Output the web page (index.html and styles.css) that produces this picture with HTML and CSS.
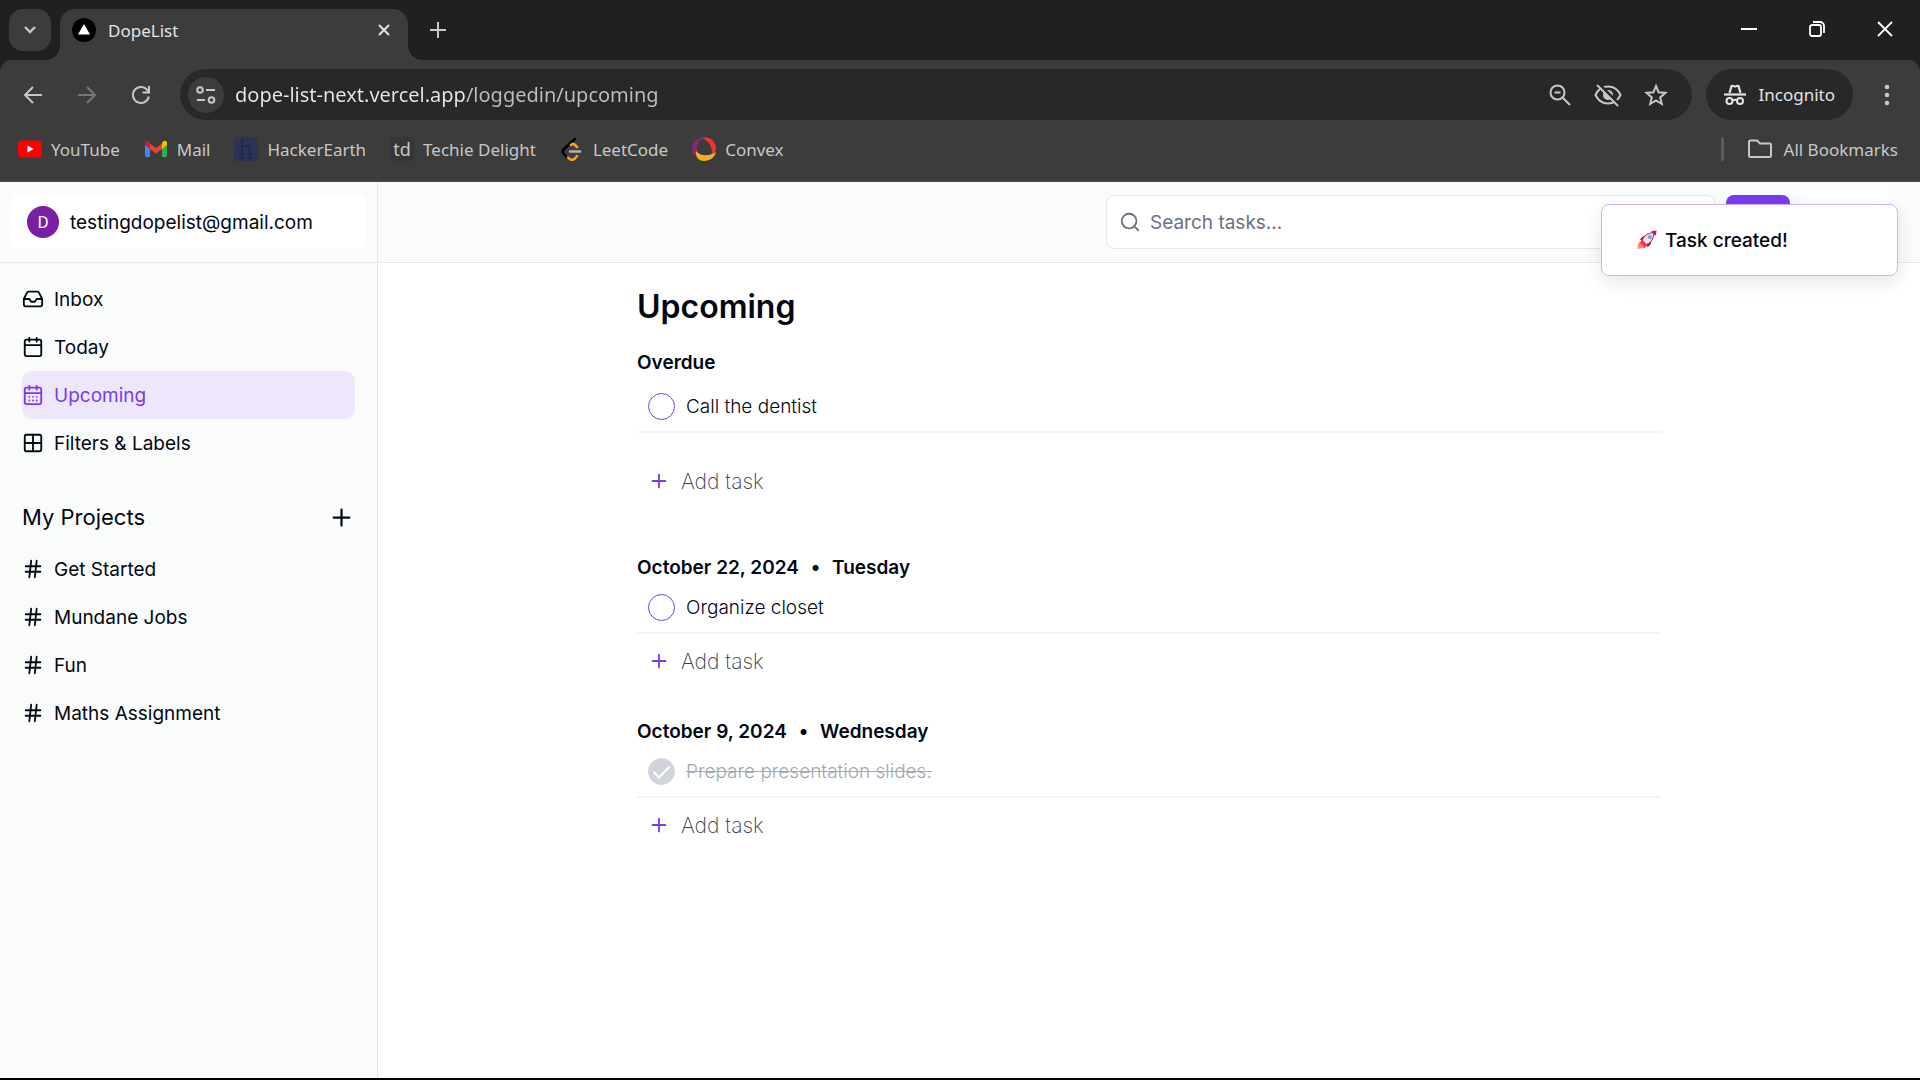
FILE: index.html
```
<!DOCTYPE html>
<html lang="en">
<head>
    <meta charset="UTF-8">
    <meta name="viewport" content="width=device-width, initial-scale=1.0">
    <title>DopeList</title>
    <link rel="stylesheet" href="styles.css">
</head>
<body>
    <!-- Shared icons -->
    <svg class="sprite" aria-hidden="true">
        <symbol id="plus" viewBox="0 0 24 24"><path d="M5 12h14M12 5v14"/></symbol>
        <symbol id="hash" viewBox="0 0 24 24"><path d="M4 9h16M4 15h16M10 3L8 21M16 3l-2 18"/></symbol>
    </svg>

    <div class="browser">
        <div class="tab-strip">
            <button class="tab-search" aria-label="Search tabs">
                <svg width="14" height="14" viewBox="0 0 14 14"><path d="M2 4l5 5 5-5" stroke-width="2.4"/></svg>
            </button>
            <div class="tab">
                <svg class="favicon" width="24" height="24" viewBox="0 0 24 24"><circle cx="12" cy="12" r="12" fill="#000"/><path d="M12 6l6 10.500H6z" fill="#fff"/></svg>
                <span class="tab-title">DopeList</span>
                <button class="icon-button" aria-label="Close tab">
                    <svg width="14" height="14" viewBox="0 0 14 14"><path d="M2 2l10 10M12 2L2 12" stroke-width="2"/></svg>
                </button>
            </div>
            <button class="icon-button new-tab" aria-label="New tab">
                <svg width="16" height="16" viewBox="0 0 16 16"><path d="M8 0v16M0 8h16" stroke-width="2"/></svg>
            </button>
            <div class="window-controls">
                <button class="icon-button" aria-label="Minimize"><svg width="16" height="16" viewBox="0 0 16 16"><path d="M0 8h16" stroke-width="2"/></svg></button>
                <button class="icon-button" aria-label="Restore"><svg width="16" height="16" viewBox="0 0 16 16"><rect x="1" y="4" width="11" height="11" rx="2" stroke-width="1.800"/><path d="M4 1h7a4 4 0 0 1 4 4v7" stroke-width="1.800"/></svg></button>
                <button class="icon-button" aria-label="Close"><svg width="16" height="16" viewBox="0 0 16 16"><path d="M1 1l14 14M15 1L1 15" stroke-width="1.800"/></svg></button>
            </div>
        </div>

        <div class="toolbar">
            <button class="icon-button" aria-label="Back"><svg width="20" height="20" viewBox="0 0 20 20"><path d="M19 10H2M10 2l-8 8 8 8" stroke-width="2"/></svg></button>
            <button class="icon-button dimmed" aria-label="Forward"><svg width="20" height="20" viewBox="0 0 20 20"><path d="M1 10h17M10 2l8 8-8 8" stroke-width="2"/></svg></button>
            <button class="icon-button" aria-label="Reload"><svg width="20" height="20" viewBox="0 0 20 20"><path d="M17.800 11.500A8 8 0 1 1 16 4.700l2 2" stroke-width="2"/><path d="M18 1v6.500h-6.500" stroke-width="2"/></svg></button>
            <div class="omnibox">
                <button class="site-info" aria-label="View site information">
                    <svg width="20" height="18" viewBox="0 0 20 18"><circle cx="4" cy="4" r="2.800"/><path d="M10 4h9M1 14h8"/><circle cx="15.500" cy="14" r="2.800"/></svg>
                </button>
                <input class="url" type="text" aria-label="Address" value="dope-list-next.vercel.app/loggedin/upcoming">
                <div class="omnibox-actions">
                    <button class="icon-button" aria-label="Zoom"><svg width="22" height="22" viewBox="0 0 22 22"><circle cx="8.500" cy="8.500" r="7"/><path d="M5.500 8.500h6M13.500 13.500l7.500 7.500"/></svg></button>
                    <button class="icon-button" aria-label="Third-party cookies blocked"><svg width="28" height="24" viewBox="0 0 28 24"><path d="M1.500 12C4 6.500 8.500 3.500 14 3.500S24 6.500 26.500 12C24 17.500 19.500 20.500 14 20.500S4 17.500 1.500 12z"/><circle cx="14" cy="12" r="5" fill="#c7c7c7" stroke="none"/><path d="M5 1l21 21" stroke="#282828" stroke-width="3"/><path d="M3 2l21 21"/></svg></button>
                    <button class="icon-button" aria-label="Bookmark this tab"><svg width="24" height="24" viewBox="0 0 24 24"><path d="M12 3l2.600 6.300 6.800.6-5.200 4.500 1.600 6.600-5.800-3.500-5.800 3.500 1.600-6.600L2.600 9.900l6.800-.6z"/></svg></button>
                </div>
            </div>
            <button class="incognito">
                <svg width="22" height="22" viewBox="0 0 22 22"><path d="M5.500 9l2-7c2-.8 2 .5 3.500.5S12.500 1.200 14.500 2l2 7" stroke-width="2.200"/><path d="M0 10.500h22" stroke-width="2.200"/><circle cx="5.500" cy="17" r="3"/><circle cx="16" cy="17" r="3"/><path d="M8.500 16.500c1.500-1 3-1 4.500 0"/></svg>
                Incognito
            </button>
            <button class="icon-button menu" aria-label="Menu"><svg width="6" height="22" viewBox="0 0 6 22"><circle cx="3" cy="3" r="2.300"/><circle cx="3" cy="11" r="2.300"/><circle cx="3" cy="19" r="2.300"/></svg></button>
        </div>

        <nav class="bookmarks" aria-label="Bookmarks">
            <a href="#"><svg width="24" height="24" viewBox="0 0 24 24"><rect y="3.500" width="24" height="17" rx="4" fill="#f00"/><path d="M9.500 8.500v7l6-3.500z" fill="#fff"/></svg>YouTube</a>
            <a href="#"><svg width="24" height="24" viewBox="0 0 24 24"><path d="M1 7v11.500Q1 20 2.500 20H6V10z" fill="#4285f4"/><path d="M23 7v11.500Q23 20 21.500 20H18V10z" fill="#34a853"/><path d="M18 6.500V12l5-4V6c0-2.500-2.500-3-4-1.500z" fill="#fbbc04"/><path d="M1 6v2l5 4V6.500L5 4.500C3.500 3 1 3.500 1 6z" fill="#c5221f"/><path d="M6 6.500l6 4.500 6-4.500V12l-6 4.500L6 12z" fill="#ea4335"/></svg>Mail</a>
            <a href="#"><svg width="24" height="24" viewBox="0 0 24 24"><path d="M0 0h24v24H0z" fill="#2c3454"/><path d="M8 3v16M8 11c2-3 8-3 8 1v7M5 21h5M14 21h5" fill="none" stroke="#20294d" stroke-width="2"/></svg>HackerEarth</a>
            <a href="#"><span class="td-icon">td</span>Techie Delight</a>
            <a href="#"><svg width="24" height="24" viewBox="0 0 24 24" fill="none" stroke-linecap="round" stroke-width="2.500"><path d="M15 2L4 12q-2.500 2.500 0 5l3 3.500" stroke="#000"/><path d="M11 8q2-2 4 0l2 2M8 20.500q3.500 4 7 1l2-2.500" stroke="#ffa116"/><path d="M10 14.500h10" stroke="#b3b3b3"/></svg>LeetCode</a>
            <a href="#"><svg width="24" height="24" viewBox="0 0 24 24"><path d="M8 1C17-2 24 4 24 11c0 3-1.500 5.500-4.500 8C21 9 17 3 8 1z" fill="#ee342f"/><path d="M14 2C7 1 4 7 5 13c.2 2 .8 4 2 6.500C-1 20-2 9 3 4c3-3 7-4 11-2z" fill="#8d2676"/><path d="M4 14c4 5 12 6 20 1-1 5-6 9-12 9-5 0-9-4-8-10z" fill="#f3b01c"/></svg>Convex</a>
            <a class="all-bookmarks" href="#"><svg width="24" height="20" viewBox="0 0 24 20" fill="none" stroke="#c7c7c7" stroke-width="2"><path d="M1 3Q1 1.500 2.500 1.500H9l3 3h9.500Q23 4.500 23 6v10.500q0 1.500-1.500 1.500h-19Q1 18 1 16.500z"/></svg>All Bookmarks</a>
        </nav>
    </div>

    <div class="app">
        <aside class="sidebar">
            <div class="user-bar">
                <button class="user">
                    <span class="avatar">D</span>
                    testingdopelist@gmail.com
                </button>
            </div>
            <nav class="nav">
                <a href="#"><svg class="icon" viewBox="0 0 24 24"><path d="M22 12h-6l-2 3h-4l-2-3H2"/><path d="M5.450 5.110L2 12v6a2 2 0 0 0 2 2h16a2 2 0 0 0 2-2v-6l-3.450-6.890A2 2 0 0 0 16.760 4H7.240a2 2 0 0 0-1.790 1.110z"/></svg>Inbox</a>
                <a href="#"><svg class="icon" viewBox="0 0 24 24"><path d="M8 2v4M16 2v4M3 10h18"/><rect x="3" y="4" width="18" height="18" rx="2"/></svg>Today</a>
                <a class="active" href="#"><svg class="icon" viewBox="0 0 24 24"><path d="M8 2v4M16 2v4M3 10h18"/><rect x="3" y="4" width="18" height="18" rx="2"/><path d="M8 14h.01M12 14h.01M16 14h.01M8 18h.01M12 18h.01M16 18h.01"/></svg>Upcoming</a>
                <a href="#"><svg class="icon" viewBox="0 0 24 24"><path d="M12 3v18M3 12h18"/><rect x="3" y="3" width="18" height="18" rx="2"/></svg>Filters &amp; Labels</a>
            </nav>
            <div class="projects-head">
                <h2>My Projects</h2>
                <button aria-label="Add project"><svg class="icon icon-large"><use href="#plus"/></svg></button>
            </div>
            <nav class="nav projects">
                <a href="#"><svg class="icon"><use href="#hash"/></svg>Get Started</a>
                <a href="#"><svg class="icon"><use href="#hash"/></svg>Mundane Jobs</a>
                <a href="#"><svg class="icon"><use href="#hash"/></svg>Fun</a>
                <a href="#"><svg class="icon"><use href="#hash"/></svg>Maths Assignment</a>
            </nav>
        </aside>

        <div class="content">
            <header class="header">
                <label class="search">
                    <svg class="icon" viewBox="0 0 24 24"><circle cx="11" cy="11" r="8"/><path d="M21 21l-4.300-4.300"/></svg>
                    <input type="search" placeholder="Search tasks..." aria-label="Search tasks">
                </label>
                <button class="search-button" aria-label="Search"></button>
                <div class="brand"></div>
            </header>

            <main class="main">
                <h1>Upcoming</h1>
                <section class="group overdue">
                    <h3>Overdue</h3>
                    <label class="task"><input type="checkbox">Call the dentist</label>
                    <button class="add-task"><svg class="icon"><use href="#plus"/></svg>Add task</button>
                </section>
                <section class="group">
                    <h3>October 22, 2024 <span class="dot">•</span> Tuesday</h3>
                    <label class="task"><input type="checkbox">Organize closet</label>
                    <button class="add-task"><svg class="icon"><use href="#plus"/></svg>Add task</button>
                </section>
                <section class="group">
                    <h3>October 9, 2024 <span class="dot">•</span> Wednesday</h3>
                    <label class="task done"><input type="checkbox" checked>Prepare presentation slides.</label>
                    <button class="add-task"><svg class="icon"><use href="#plus"/></svg>Add task</button>
                </section>
            </main>
        </div>

        <div class="toast" role="status">
            <svg width="20" height="20" viewBox="0 0 20 20">
                <path d="M1 14q1-3 4-3l4 4q0 3-3 3l-5.500 1z" fill="#ff8a65"/>
                <path d="M3 10q1-4 6-4.500L7 10zM10 17q4-1 4.500-6L10 13z" fill="#c2185b"/>
                <path d="M5 11Q7 3 17 2.500q0 9-8 12.500z" fill="#e4eaee" stroke="#c2185b"/>
                <path d="M14 1.500Q17 .5 19.500.5q0 2.500-1 5.500z" fill="#c2185b"/>
                <path d="M5 9l5.500 6-3 3L6 15l-3-1z" fill="#f8315a"/>
                <circle cx="13" cy="7" r="2.200" fill="#82aec0"/>
            </svg>
            Task created!
        </div>
    </div>
</body>
</html>
```
FILE: styles.css
```
* {
    box-sizing: border-box;
}
body {
    margin: 0;
    min-height: 100vh;
    display: flex;
    flex-direction: column;
    border-bottom: 2px solid #000;
    font-family: Inter, sans-serif;
    font-size: 19px;
    color: #030712;
    background-color: #fff;
}
button, input {
    font: inherit;
    color: inherit;
    border: none;
    background: none;
    padding: 0;
    margin: 0;
}
button {
    cursor: pointer;
}
a {
    color: inherit;
    text-decoration: none;
}
h1, h2, h3 {
    margin: 0;
}
svg {
    flex-shrink: 0;
}
.sprite {
    display: none;
}

/* Browser window */
.browser {
    font-family: "Noto Sans", sans-serif;
    font-size: 17px;
    color: #c7c7c7;
    background-color: #1f2120;
}
.browser button {
    display: flex;
    align-items: center;
    justify-content: center;
}
.browser button svg {
    fill: none;
    stroke: currentColor;
    stroke-width: 2;
}
.browser .menu svg {
    fill: currentColor;
    stroke: none;
}
.icon-button {
    width: 36px;
    height: 36px;
}
.dimmed {
    color: #777;
}
.tab-strip {
    display: flex;
    height: 60px;
    padding: 9px 17px 0 9px;
}
.tab-search {
    width: 42px;
    height: 42px;
    border-radius: 14px;
    background-color: #3c3c3c;
}
.tab {
    position: relative;
    display: flex;
    align-items: center;
    gap: 12px;
    width: 348px;
    margin-left: 9px;
    padding: 0 6px 9px 12px;
    border-radius: 15px 15px 0 0;
    background-color: #3c3c3c;
    color: #e3e3e3;
}
/* curved feet of the active tab */
.tab::before, .tab::after {
    content: "";
    position: absolute;
    bottom: 0;
    width: 15px;
    height: 15px;
}
.tab::before {
    left: -15px;
    background: radial-gradient(circle at 0 0, transparent 15px, #3c3c3c 15px);
}
.tab::after {
    right: -15px;
    background: radial-gradient(circle at 100% 0, transparent 15px, #3c3c3c 15px);
}
.tab-title {
    flex: 1;
}
.new-tab {
    margin: 3px 0 0 12px;
}
.window-controls {
    display: flex;
    gap: 32px;
    margin: 2px 0 0 auto;
    color: #fff;
}
.toolbar {
    display: flex;
    align-items: center;
    gap: 18px;
    padding: 9px 15px 0;
    border-radius: 12px 12px 0 0;
    background-color: #3c3c3c;
}
.omnibox {
    flex: 1;
    display: flex;
    align-items: center;
    height: 51px;
    margin-left: 3px;
    padding: 0 18px 0 8px;
    border-radius: 26px;
    background-color: #282828;
}
.site-info {
    width: 36px;
    height: 36px;
    border-radius: 50%;
    background-color: #3c3c3c;
}
.url {
    flex: 1;
    margin-left: 11px;
    font-size: 20px;
    color: transparent;
    background: linear-gradient(90deg, #e8e8e8 230px, #bfbfbf 230px);
    background-clip: text;
}
.omnibox-actions {
    display: flex;
    gap: 12px;
}
.incognito {
    gap: 13px;
    height: 51px;
    padding: 0 18px;
    margin-left: -4px;
    border-radius: 26px;
    background-color: #282828;
    color: #e3e3e3;
}
.menu {
    margin-left: -2px;
}
.bookmarks {
    display: flex;
    align-items: center;
    gap: 24px;
    height: 62px;
    padding: 0 22px 2px 18px;
    border-bottom: 2px solid #474747;
    background-color: #3c3c3c;
}
.bookmarks a {
    display: flex;
    align-items: center;
    gap: 9px;
}
.td-icon {
    width: 24px;
    font-size: 18px;
    line-height: 24px;
    text-align: center;
    background-color: #363636;
}
.bookmarks .all-bookmarks {
    gap: 12px;
    margin-left: auto;
}
.all-bookmarks::before {
    content: "";
    width: 3px;
    height: 24px;
    margin-right: 12px;
    border-radius: 2px;
    background-color: #5c5c5c;
}

/* App */
.app {
    position: relative;
    flex: 1;
    display: flex;
}
.icon {
    width: 22px;
    height: 22px;
    fill: none;
    stroke: currentColor;
    stroke-width: 2;
    stroke-linecap: round;
    stroke-linejoin: round;
}
.icon-large {
    width: 27px;
    height: 27px;
}
.sidebar {
    width: 378px;
    flex-shrink: 0;
    border-right: 1px solid #e5e7eb;
    background-color: #fafcfb;
}
.user-bar {
    height: 81px;
    padding: 13px 11px;
    border-bottom: 1px solid #e5e7eb;
}
.user {
    display: flex;
    align-items: center;
    gap: 11px;
    width: 100%;
    height: 54px;
    padding: 0 16px;
    border-radius: 8px;
    background-color: #fff;
}
.avatar {
    width: 32px;
    line-height: 32px;
    border-radius: 50%;
    font-family: Roboto, sans-serif;
    font-size: 17px;
    color: #fff;
    background-color: #7b1fa2;
}
.nav {
    padding: 12px 22px 0;
}
.nav a {
    display: flex;
    align-items: center;
    gap: 10px;
    height: 48px;
    border-radius: 10px;
}
.nav .active {
    color: #7c3aed;
    background-color: #eee6fa;
}
.projects-head {
    display: flex;
    align-items: center;
    justify-content: space-between;
    margin-top: 36px;
    padding: 0 22px;
}
.projects-head h2 {
    font-size: 22px;
    line-height: 28px;
    font-weight: 400;
}
.projects-head button {
    display: flex;
}
.projects {
    padding-top: 14px;
}
.content {
    flex: 1;
    min-width: 0;
}
.header {
    display: flex;
    align-items: center;
    justify-content: flex-end;
    gap: 11px;
    height: 81px;
    padding: 0 32px;
    border-bottom: 1px solid #e5e7eb;
    background-color: #fafcfb;
}
.search {
    display: flex;
    align-items: center;
    gap: 9px;
    flex: 0 1 609px;
    height: 54px;
    padding: 0 12px;
    border: 1px solid #e5e7eb;
    border-radius: 8px;
    background-color: #fff;
    color: #6b7280;
}
.search input {
    flex: 1;
}
.search input::placeholder {
    color: #6b7280;
}
.search-button {
    width: 64px;
    height: 54px;
    border-radius: 8px;
    background-color: #7c3aed;
}
.brand {
    width: 87px;
    height: 74px;
    background-color: #fdfefd;
}
.main {
    max-width: 1024px;
    margin: 0 auto;
    padding-top: 24px;
}
.main h1 {
    font-size: 32px;
    line-height: 40px;
    font-weight: 600;
}
.group {
    padding-bottom: 32px;
}
.group h3 {
    font-size: 19px;
    line-height: 24px;
    font-weight: 600;
}
.dot {
    margin: 0 7px;
}
.task {
    display: flex;
    align-items: center;
    gap: 11px;
    height: 54px;
    padding: 3px 0 0 11px;
    border-bottom: 2px solid #f3f4f6;
    font-weight: 300;
}
.task input {
    appearance: none;
    width: 27px;
    height: 27px;
    border: 1px solid #7c3aed;
    border-radius: 50%;
}
.task input:checked {
    display: flex;
    align-items: center;
    justify-content: center;
    border-color: #d1d5db;
    background-color: #d1d5db;
}
.task input:checked::after {
    content: "";
    width: 7px;
    height: 14px;
    margin-bottom: 4px;
    border: solid #fff;
    border-width: 0 2px 2px 0;
    transform: rotate(45deg);
}
.done {
    color: #a5a9b1;
    text-decoration: line-through;
}
.add-task {
    display: flex;
    align-items: center;
    gap: 11px;
    height: 54px;
    padding-left: 11px;
    font-size: 21px;
    font-weight: 200;
    color: #374151;
}
.add-task .icon {
    color: #7c3aed;
}
.overdue h3 {
    margin: 24px 0 4px;
}
.overdue .add-task {
    margin-top: 21px;
}
.overdue {
    padding-bottom: 48px;
}
.toast {
    position: absolute;
    top: 22px;
    right: 22px;
    display: flex;
    align-items: center;
    gap: 8px;
    width: 297px;
    height: 72px;
    padding: 0 35px;
    border: 1px solid #cbb2f8;
    border-radius: 8px;
    background-color: #fff;
    font-weight: 500;
    box-shadow: 0 6px 18px rgba(0, 0, 0, 0.1);
}
```
